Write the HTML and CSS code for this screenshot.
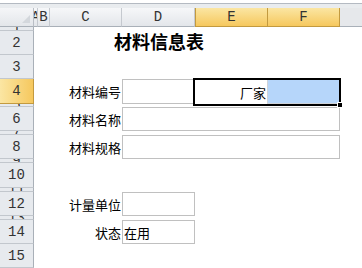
FILE: index.html
```html
<!DOCTYPE html>
<html>
<head>
    <title>材料信息表</title>
    <link rel="stylesheet" href="styles.css">
</head>
<body>
    <div class="sheet">
        <div class="topbar">
            <div class="fx-line"></div>
            <div class="fx-gap"></div>
        </div>
        <div class="colhead">
            <div class="corner"></div>
            <div class="ch w-a">A</div>
            <div class="ch w-b">B</div>
            <div class="ch w-c">C</div>
            <div class="ch w-d">D</div>
            <div class="ch w-e sel">E</div>
            <div class="ch w-f sel">F</div>
            <div class="ch-rest"></div>
        </div>
        <div class="body">
            <div class="rowhead">
                <div class="rh h4">1</div>
                <div class="rh h24">2</div>
                <div class="rh h24">3</div>
                <div class="rh h25 sel">4</div>
                <div class="rh h3">5</div>
                <div class="rh h24">6</div>
                <div class="rh h4">7</div>
                <div class="rh h24">8</div>
                <div class="rh h4">9</div>
                <div class="rh h25">10</div>
                <div class="rh h4">11</div>
                <div class="rh h24">12</div>
                <div class="rh h4">13</div>
                <div class="rh h24">14</div>
                <div class="rh h24">15</div>
            </div>
            <div class="cells">
                <div class="title r2">材料信息表</div>

                <div class="lbl r4">材料编号</div>
                <div class="box col-d r4"></div>
                <div class="selection r4">
                    <div class="sel-active">厂家</div>
                    <div class="sel-range"></div>
                    <div class="fill-handle"></div>
                </div>

                <div class="lbl r6">材料名称</div>
                <div class="box col-df r6"></div>

                <div class="lbl r8">材料规格</div>
                <div class="box col-df r8"></div>

                <div class="lbl r12">计量单位</div>
                <div class="box col-d r12"></div>

                <div class="lbl r14">状态</div>
                <div class="box col-d r14 val">在用</div>
            </div>
        </div>
    </div>
</body>
</html>
```

FILE: styles.css
```css
* {
    box-sizing: border-box;
}
body {
    margin: 0;
    background: #fff;
    font-family: "Noto Sans CJK SC", sans-serif;
    font-size: 13px;
    color: #000;
}
.sheet {
    width: 362px;
    height: 268px;
    overflow: hidden;
}

/* formula bar remains */
.topbar {
    height: 8px;
}
.fx-line {
    height: 4px;
    background: #fff;
    border-bottom: 1px solid #b4bac2;
}
.fx-gap {
    height: 4px;
    background: #e9ecef;
}

/* column headers */
.colhead {
    display: flex;
    height: 19px;
    font-family: "Liberation Mono", monospace;
    font-size: 14px;
    color: #333;
}
.corner {
    position: relative;
    width: 34px;
    background: linear-gradient(#f5f6f8, #e3e6ea);
    border-right: 1px solid #b9bec5;
    border-bottom: 1px solid #a9b0b8;
}
.corner::after {
    content: "";
    position: absolute;
    right: 3px;
    bottom: 3px;
    border-left: 8px solid transparent;
    border-bottom: 8px solid #d3d7dc;
}
.ch {
    display: flex;
    align-items: center;
    justify-content: center;
    overflow: hidden;
    background: linear-gradient(#f6f7f9, #e3e6ea);
    border-right: 1px solid #c5c9cf;
    border-bottom: 1px solid #a9b0b8;
}
.ch.sel {
    background: linear-gradient(#fbe6a3, #f6c85e);
    border-right-color: #c39a3f;
    border-bottom-color: #c39a3f;
}
.w-a { width: 4px; }
.w-b { width: 12px; }
.w-c { width: 72px; }
.w-d { width: 73px; }
.w-e { width: 73px; border-left: 1px solid #c39a3f; }
.w-f { width: 72px; }
.ch-rest {
    flex: 1;
    background: #e6e8eb;
    border-bottom: 1px solid #a9b0b8;
}

/* body */
.body {
    display: flex;
}
.rowhead {
    width: 34px;
    display: flex;
    flex-direction: column;
    font-family: "Liberation Mono", monospace;
    font-size: 14px;
    color: #333;
}
.rh {
    display: flex;
    align-items: center;
    justify-content: center;
    overflow: hidden;
    background: #e7eaee;
    border-right: 1px solid #a9b0b8;
    border-bottom: 1px solid #c2c7cd;
}
.rh.sel {
    background: linear-gradient(90deg, #fbe6a3, #f6c85e);
    border-bottom-color: #c39a3f;
    border-right-color: #c39a3f;
}
.h3 { height: 3px; }
.h4 { height: 4px; }
.h24 { height: 24px; }
.h25 { height: 25px; }

.cells {
    display: grid;
    grid-template-columns: 4px 12px 72px 73px 73px 72px;
    grid-template-rows: 4px 24px 24px 25px 3px 24px 4px 24px 4px 25px 4px 24px 4px 24px 24px;
}
.r2 { grid-row: 2; }
.r4 { grid-row: 4; }
.r6 { grid-row: 6; }
.r8 { grid-row: 8; }
.r12 { grid-row: 12; }
.r14 { grid-row: 14; }

.title {
    grid-column: 3 / 6;
    align-self: start;
    text-align: center;
    font-size: 18px;
    font-weight: bold;
    line-height: 18px;
    padding-top: 1px;
}
.lbl {
    grid-column: 3;
    display: flex;
    align-items: center;
    justify-content: flex-end;
    padding-right: 1px;
    white-space: nowrap;
}
.box {
    border: 1px solid #c0c0c0;
}
.col-d { grid-column: 4; }
.col-df { grid-column: 4 / 7; }
.val {
    display: flex;
    align-items: center;
    padding-left: 1px;
}

/* selected range E4:F4 */
.selection {
    grid-column: 5 / 7;
    position: relative;
    display: flex;
    margin: -1px -1px -2px -2px;
    border: 2px solid #000;
}
.sel-active {
    width: 72px;
    display: flex;
    align-items: center;
    justify-content: flex-end;
    padding-right: 1px;
    background: #fff;
}
.sel-range {
    flex: 1;
    background: #b6d6fa;
    border-left: 1px solid #cfd3d8;
    border-bottom: 1px solid #cfd3d8;
}
.fill-handle {
    position: absolute;
    right: -4px;
    bottom: -4px;
    width: 6px;
    height: 6px;
    background: #000;
    border: 1px solid #fff;
}
```
